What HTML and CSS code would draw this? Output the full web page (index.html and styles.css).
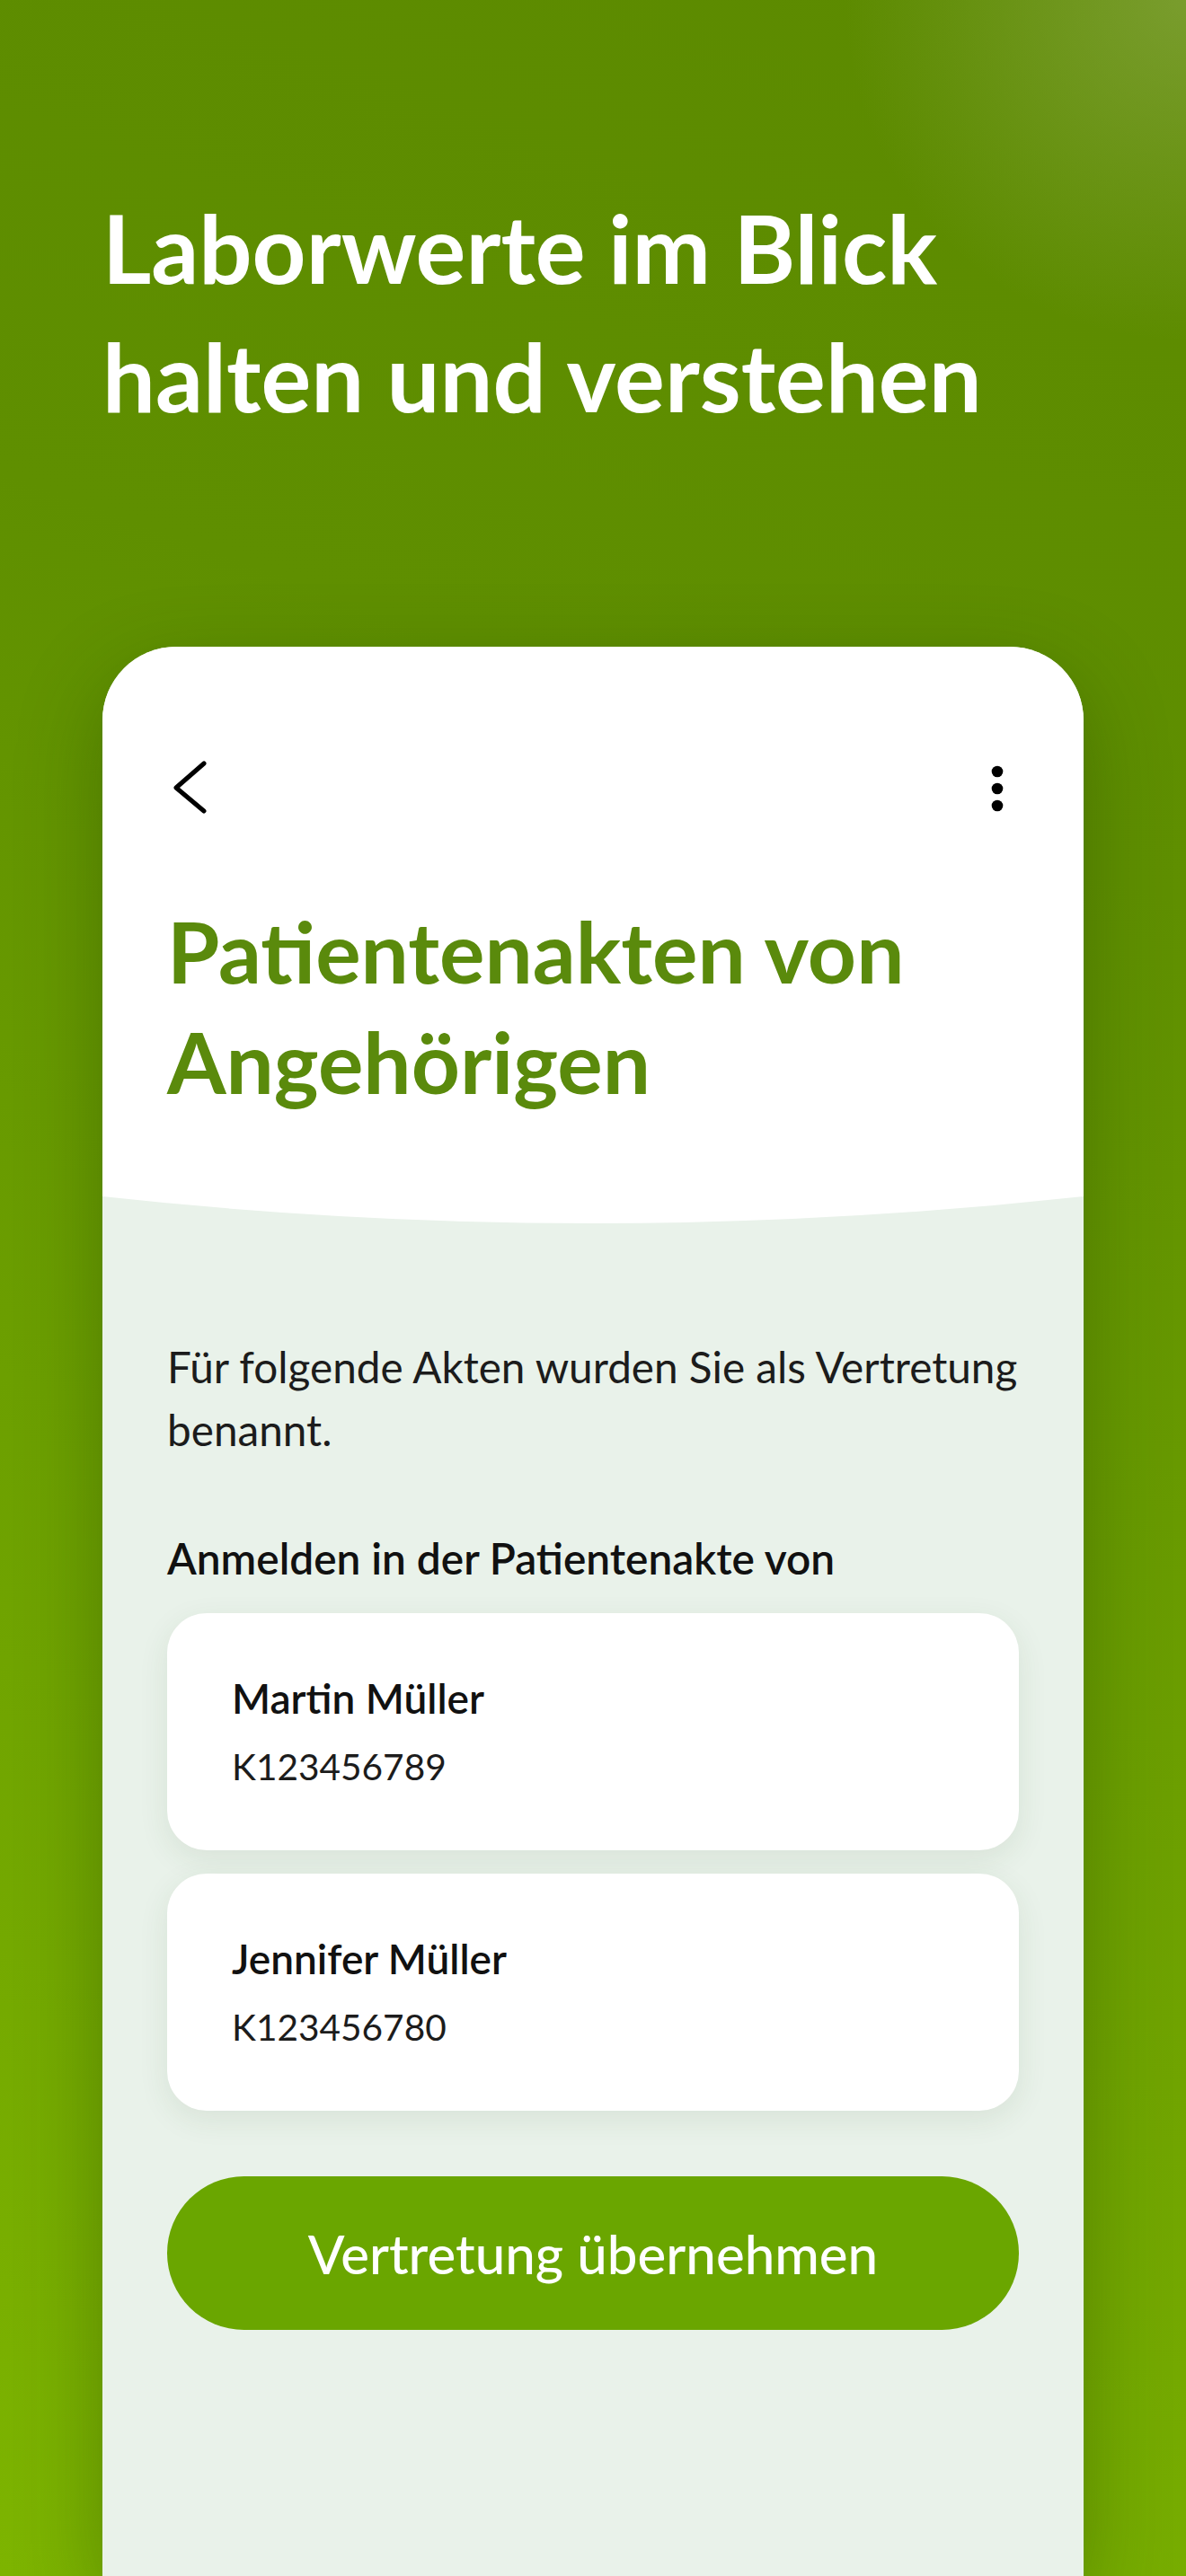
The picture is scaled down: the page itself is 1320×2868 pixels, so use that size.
FILE: index.html
```html
<!DOCTYPE html>
<html lang="de">
<head>
<meta charset="utf-8">
<title>Patientenakten von Angehörigen</title>
<link rel="stylesheet" href="styles.css">
</head>
<body>
  <div class="page">
    <h1 class="hero">Laborwerte im Blick<br>halten und verstehen</h1>

    <section class="phone">
      <header class="phone-head">
        <nav class="nav">
          <svg class="icon" width="48" height="60" viewBox="0 0 48 60" aria-label="Zurück">
            <path d="M41 3 L10 30 L41 56" fill="none" stroke="#000" stroke-width="5" stroke-linecap="round" stroke-linejoin="round"/>
          </svg>
          <svg class="icon" width="48" height="60" viewBox="0 0 48 60" aria-label="Mehr">
            <circle cx="24" cy="12" r="6.3" fill="#000"/>
            <circle cx="24" cy="31" r="6.3" fill="#000"/>
            <circle cx="24" cy="50" r="6.3" fill="#000"/>
          </svg>
        </nav>
        <h2 class="title">Patientenakten von Angehörigen</h2>
      </header>

      <div class="phone-body">
        <svg class="curve" width="1092" height="30" viewBox="0 0 1092 30" preserveAspectRatio="none">
          <path d="M0 0 H1092 Q546 60 0 0 Z" fill="#fff"/>
        </svg>
        <div class="content">
          <p class="intro">Für folgende Akten wurden Sie als Vertretung benannt.</p>
          <h3 class="label">Anmelden in der Patientenakte von</h3>
          <ul class="records">
            <li class="record">
              <span class="record-name">Martin Müller</span>
              <span class="record-id">K123456789</span>
            </li>
            <li class="record">
              <span class="record-name">Jennifer Müller</span>
              <span class="record-id">K123456780</span>
            </li>
          </ul>
          <button class="primary" type="button">Vertretung übernehmen</button>
        </div>
      </div>
    </section>
  </div>
</body>
</html>
```
FILE: styles.css
```css
* { box-sizing: border-box; }

html, body {
  margin: 0;
  padding: 0;
}

body {
  font-family: "Lato", "Noto Sans", sans-serif;
  background:
    radial-gradient(circle at 100% 0%, rgba(150, 175, 90, 0.5) 0px, rgba(150, 175, 90, 0) 380px),
    linear-gradient(200deg, #5c8a00 0%, #5f8f00 30%, #6c9f00 60%, #7db400 100%);
  min-height: 2868px;
  overflow: hidden;
}

.page {
  min-height: 2868px;
  display: flex;
  flex-direction: column;
  padding: 204px 114px 0;
}

.hero {
  margin: 0;
  color: #fff;
  font-size: 104.5px;
  font-weight: 700;
  line-height: 143px;
}

.phone {
  margin-top: 230px;
  flex: 1;
  display: flex;
  flex-direction: column;
  border-radius: 82px 82px 0 0;
  overflow: hidden;
  background: #e9f2ea;
  box-shadow: 0 30px 90px rgba(30, 60, 0, 0.35);
}

.phone-head {
  background: #fff;
  padding: 127px 72px 89px;
}

.nav {
  display: flex;
  justify-content: space-between;
  align-items: center;
  height: 60px;
}

.icon { display: block; }

.title {
  margin: 90px 0 0;
  color: #5a8a0c;
  font-size: 94.5px;
  font-weight: 700;
  line-height: 123px;
}

.phone-body {
  flex: 1;
  display: flex;
  flex-direction: column;
}

.curve {
  display: block;
  width: 100%;
  height: 30px;
}

.content {
  padding: 125px 72px 0;
  display: flex;
  flex-direction: column;
}

.intro {
  margin: 0;
  color: #1c1c1c;
  font-size: 47.7px;
  font-weight: 400;
  line-height: 70px;
}

.label {
  margin: 78px 0 0;
  color: #111;
  font-size: 47.8px;
  font-weight: 600;
  line-height: 60px;
}

.records {
  list-style: none;
  margin: 31px 0 0;
  padding: 0;
  display: flex;
  flex-direction: column;
  gap: 26px;
}

.record {
  background: #fff;
  border-radius: 44px;
  padding: 67px 72px 65px;
  display: flex;
  flex-direction: column;
  gap: 20px;
  box-shadow: 0 10px 34px rgba(40, 80, 30, 0.09);
}

.record-name {
  color: #111;
  font-size: 46px;
  font-weight: 600;
  line-height: 56px;
}

.record-id {
  color: #1c1c1c;
  font-size: 40.6px;
  font-weight: 400;
  line-height: 56px;
}

.primary {
  margin-top: 73px;
  height: 171px;
  border: 0;
  border-radius: 86px;
  background: #6aa600;
  color: #fff;
  font-family: inherit;
  font-size: 60px;
  font-weight: 500;
  cursor: pointer;
}
```
